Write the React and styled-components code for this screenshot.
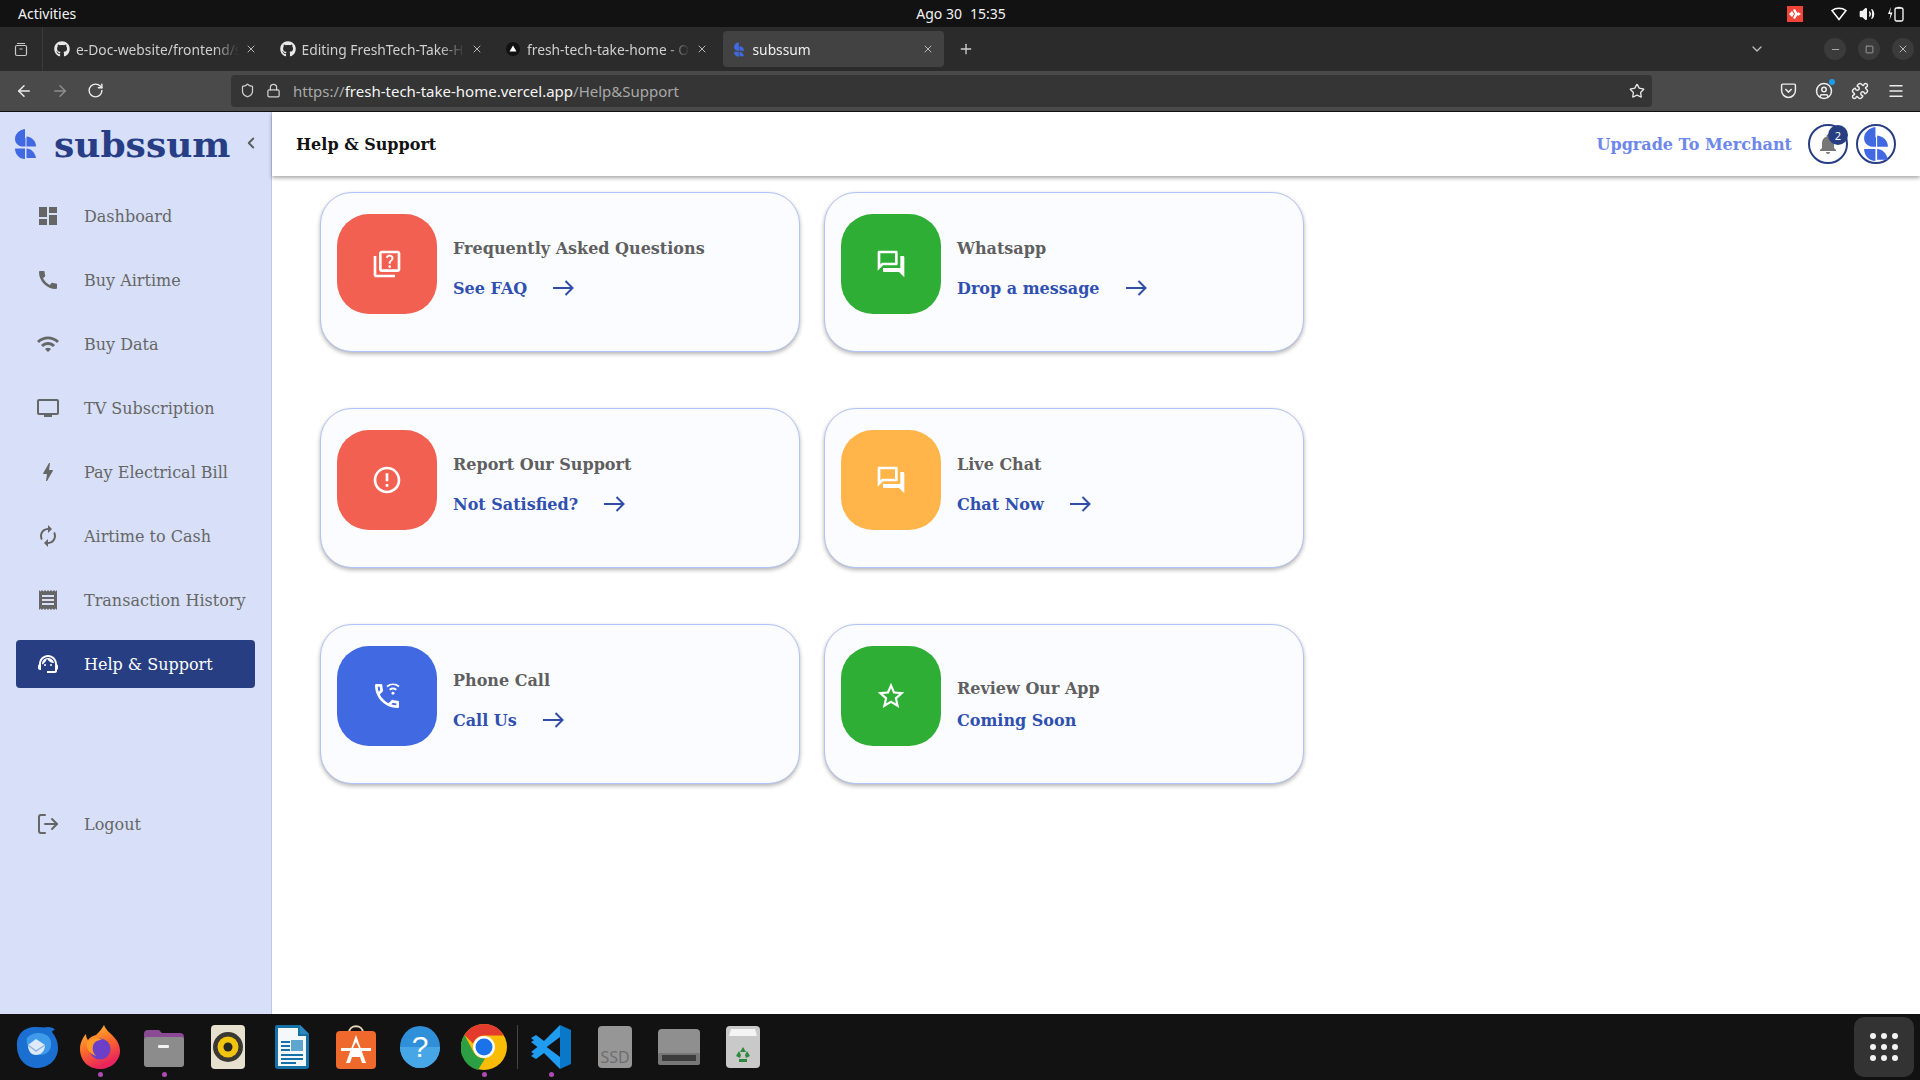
import React from "react";
import styled, { createGlobalStyle } from "styled-components";
import { FaGithub } from "react-icons/fa";
import {
    ArrowLeft,
    ArrowRight,
    ChevronDown,
    ChevronLeft,
    CircleUser,
    Lock,
    LogOut,
    Menu,
    Minus,
    Plus,
    Puzzle,
    RotateCw,
    Shield,
    Square,
    Star,
    Volume2,
    X,
} from "lucide-react";

const GlobalStyle = createGlobalStyle`
    html, body {
        margin: 0;
        padding: 0;
        width: 100%;
        height: 100%;
        overflow: hidden;
        background: #fff;
    }
    * {
        box-sizing: border-box;
    }
`;

const Screen = styled.div`
    width: 1920px;
    height: 1080px;
    display: flex;
    flex-direction: column;
    overflow: hidden;
    font-family: "DejaVu Serif", serif;
`;

/* system bar */
const TopBar = styled.div`
    height: 27px;
    flex: none;
    background: #121212;
    color: #f2f2f2;
    font-family: "Noto Sans", sans-serif;
    font-size: 14px;
    display: grid;
    grid-template-columns: 1fr auto 1fr;
    align-items: center;
    padding: 0 16px 0 18px;
`;

const Clock = styled.div`
    display: flex;
    gap: 8px;
`;

const Tray = styled.div`
    display: flex;
    align-items: center;
    justify-content: flex-end;
    gap: 12px;
`;

const RecordBadge = styled.div`
    width: 16px;
    height: 16px;
    background: #f0433a;
    margin-right: 16px;
    display: flex;
    align-items: center;
    justify-content: center;
`;

/* tabs */
const TabStrip = styled.div`
    height: 44px;
    flex: none;
    background: #2b2b2b;
    display: flex;
    align-items: center;
    color: #d6d6d6;
    font-family: "Noto Sans", sans-serif;
    font-size: 13.8px;
`;

const TabListButton = styled.div`
    width: 43px;
    height: 44px;
    border-right: 1px solid #3c3c3c;
    margin-right: 3px;
    display: flex;
    align-items: center;
    justify-content: center;
    color: #c8c8c8;
`;

const Tab = styled.div`
    width: 221px;
    height: 36px;
    margin-right: 4.5px;
    padding: 0 10px 0 8px;
    display: flex;
    align-items: center;
    gap: 6px;
    border-radius: 4px;
    background: ${(p) => (p.$active ? "#424242" : "transparent")};
    color: ${(p) => (p.$active ? "#f0f0f0" : "#cfcfcf")};
`;

const TabTitle = styled.span`
    flex: 1;
    white-space: nowrap;
    overflow: hidden;
    mask-image: linear-gradient(to right, #000 85%, transparent 100%);
`;

const FaviconSlot = styled.span`
    width: 16px;
    height: 16px;
    flex: none;
    display: flex;
    align-items: center;
    justify-content: center;
    color: #e8e8e8;
`;

const NewTab = styled.div`
    margin-left: 10px;
    display: flex;
    color: #d0d0d0;
`;

const WindowControls = styled.div`
    margin-left: auto;
    display: flex;
    align-items: center;
    padding-right: 6px;
    gap: 12px;
`;

const TabsMenu = styled.div`
    display: flex;
    color: #bdbdbd;
    margin-right: 47px;
`;

const WindowButton = styled.div`
    width: 22px;
    height: 22px;
    border-radius: 50%;
    background: #3b3b3b;
    display: flex;
    align-items: center;
    justify-content: center;
    color: #b5b5b5;
`;

/* address bar */
const Toolbar = styled.div`
    height: 41px;
    flex: none;
    background: #4a4a4a;
    border-bottom: 1px solid #111;
    display: flex;
    align-items: center;
    padding: 0 15px 1px 0;
    color: #ececec;
`;

const NavButtons = styled.div`
    width: 231px;
    padding-left: 15px;
    display: flex;
    align-items: center;
    gap: 18px;
`;

const UrlBar = styled.div`
    width: 1421px;
    height: 32px;
    border-radius: 4px;
    background: #353535;
    display: flex;
    align-items: center;
    padding: 0 7px 0 9px;
    gap: 11px;
    font-family: "Noto Sans", sans-serif;
    font-size: 15px;
    color: #a8a8a8;
`;

const UrlText = styled.div`
    flex: 1;
    margin-left: 1px;
    white-space: nowrap;
    b {
        font-weight: 400;
        color: #f4f4f4;
    }
`;

const ToolIcons = styled.div`
    margin-left: auto;
    display: flex;
    align-items: center;
    gap: 18px;
`;

const AccountWrap = styled.div`
    position: relative;
    display: flex;
    &::after {
        content: "";
        position: absolute;
        top: -3px;
        right: -2px;
        width: 6px;
        height: 6px;
        border-radius: 50%;
        background: #1e9ce8;
    }
`;

/* page */
const Body = styled.div`
    flex: 1;
    min-height: 0;
    display: flex;
`;

const Sidebar = styled.aside`
    width: 272px;
    flex: none;
    background: #d7e0f8;
    border-right: 1px solid #bcc8e6;
    padding: 0 16px;
`;

const Brand = styled.div`
    height: 64px;
    display: flex;
    align-items: center;
    margin: 0 -16px 16px;
    padding-left: 15px;
`;

const BrandName = styled.div`
    font-size: 36px;
    font-weight: 700;
    color: #273e86;
    margin-left: 18px;
    line-height: 1;
`;

const BrandToggle = styled.div`
    display: flex;
    color: #5c5c5c;
    margin-left: 12px;
    margin-top: -3px;
`;

const NavList = styled.nav`
    display: flex;
    flex-direction: column;
    gap: 16px;
    width: 239px;
`;

const NavItem = styled.div`
    height: 48px;
    padding-left: 20px;
    display: flex;
    align-items: center;
    gap: 24px;
    font-size: 16px;
    border-radius: 4px;
    white-space: nowrap;
    margin-top: ${(p) => (p.$pushed ? "96px" : "0")};
    background: ${(p) => (p.$active ? "#273e82" : "transparent")};
    color: ${(p) => (p.$active ? "#fff" : "#666")};
`;

const Main = styled.main`
    flex: 1;
    min-width: 0;
    background: #fff;
`;

const Header = styled.header`
    height: 64px;
    background: #fff;
    box-shadow: 0 2px 4px rgba(0, 0, 0, 0.35);
    display: flex;
    align-items: center;
    padding: 0 24px;
`;

const PageTitle = styled.h1`
    margin: 0;
    font-size: 16px;
    font-weight: 700;
    color: #111;
`;

const UpgradeLink = styled.div`
    margin-left: auto;
    margin-right: 16px;
    font-size: 16px;
    font-weight: 700;
    color: #6d87ea;
`;

const RoundButton = styled.div`
    position: relative;
    width: 40px;
    height: 40px;
    border-radius: 50%;
    border: 2px solid #273e82;
    background: #fff;
    margin-left: ${(p) => p.$gap || 0}px;
    display: flex;
    align-items: center;
    justify-content: center;
    color: #777;
`;

const Badge = styled.span`
    position: absolute;
    top: -1px;
    right: -2px;
    width: 20px;
    height: 20px;
    border-radius: 50%;
    background: #273e82;
    color: #fff;
    font-size: 11px;
    font-family: "Noto Sans", sans-serif;
    display: flex;
    align-items: center;
    justify-content: center;
`;

const CardGrid = styled.div`
    display: grid;
    grid-template-columns: repeat(2, 480px);
    grid-auto-rows: 160px;
    column-gap: 24px;
    row-gap: 56px;
    padding: 16px 0 0 48px;
`;

const Card = styled.div`
    background: #fbfcff;
    border: 1px solid #b3c3f3;
    border-radius: 32px;
    box-shadow: 0 2px 4px rgba(0, 0, 0, 0.3);
    padding: 21px 16px 0;
    display: flex;
    align-items: flex-start;
    gap: 16px;
`;

const IconTile = styled.div`
    width: 100px;
    height: 100px;
    flex: none;
    border-radius: 32px;
    background: ${(p) => p.$color};
    color: #fff;
    display: flex;
    align-items: center;
    justify-content: center;
`;

const CardText = styled.div`
    height: 100px;
    padding-bottom: 14px;
    display: flex;
    flex-direction: column;
    justify-content: flex-end;
`;

const CardTitle = styled.div`
    height: 24px;
    line-height: 24px;
    font-size: 16px;
    font-weight: 700;
    color: #5f5f5f;
    margin-bottom: ${(p) => (p.$tight ? "7px" : "15px")};
`;

const CardLink = styled.div`
    height: 24px;
    display: flex;
    align-items: center;
    gap: 26px;
    font-size: 16px;
    font-weight: 700;
    color: #3050b0;
`;

/* dock */
const Dock = styled.div`
    height: 66px;
    flex: none;
    background: #121212;
    display: flex;
    align-items: center;
    padding: 0 6px 0 4px;
`;

const DockItem = styled.div`
    position: relative;
    width: 64px;
    height: 66px;
    flex: none;
    display: flex;
    align-items: center;
    justify-content: center;
    ${(p) =>
        p.$running &&
        `&::after {
            content: "";
            position: absolute;
            bottom: 3px;
            left: 50%;
            margin-left: -2.5px;
            width: 5px;
            height: 5px;
            border-radius: 50%;
            background: #b04bb5;
        }`}
`;

const DockSeparator = styled.div`
    width: 1px;
    height: 44px;
    margin: 0 1px;
    background: #444;
    flex: none;
`;

const AppGrid = styled.div`
    margin-left: auto;
    width: 60px;
    height: 60px;
    border-radius: 10px;
    background: #333;
    display: grid;
    grid-template-columns: repeat(3, 6px);
    grid-auto-rows: 6px;
    gap: 5px;
    align-content: center;
    justify-content: center;
    span {
        background: #f2f2f2;
        border-radius: 50%;
    }
`;

const MuiIcon = ({ d, size = 24, fill = "currentColor" }) => (
    <svg width={size} height={size} viewBox="0 0 24 24" fill={fill}>
        <path d={d} />
    </svg>
);

const LogoMark = ({ width = 21, height = 30 }) => (
    <svg width={width} height={height} viewBox="0 0 21 30" fill="#4169e1">
        <path d="M10 0C4 1 0 5 0 10c0 4 3 7 7 7.500h3.500V9H10z" />
        <path d="M11.500 7.500C17 8 21 12 21 17.500h-9.500z" />
        <path d="M0 19.500h10V30C4 30 0 25 0 19.500z" />
        <path d="M11.500 19.500c4.500 0 8.500 4 9.500 9.500h-9.500z" />
    </svg>
);

const HeadsetIcon = () => (
    <svg width="24" height="24" viewBox="0 0 24 24" fill="currentColor">
        <path d="M21 12.220C21 6.730 16.740 3 12 3c-4.690 0-9 3.650-9 9.280-.6.340-1 .980-1 1.720v2c0 1.100.9 2 2 2h1v-6.100c0-3.870 3.130-7 7-7s7 3.130 7 7V19h-8v2h8c1.100 0 2-.9 2-2v-1.220c.59-.31 1-.92 1-1.610v-2.300c0-.67-.41-1.280-1-1.650z" />
        <circle cx="9" cy="13" r="1" />
        <circle cx="15" cy="13" r="1" />
        <path d="M18 11.030C17.520 8.180 15.040 6 12.050 6c-3.030 0-6.290 2.510-6.030 6.450 2.470-1.010 4.330-3.210 4.860-5.890 1.310 2.630 4 4.440 7.120 4.470z" />
    </svg>
);

const WifiCallIcon = () => (
    <svg width="32" height="32" viewBox="0 0 24 24" fill="currentColor">
        <path d="M6.540 5c.06.89.21 1.760.45 2.590l-1.200 1.200c-.41-1.200-.67-2.470-.76-3.790h1.510m9.860 12.020c.85.24 1.720.39 2.600.45v1.490c-1.320-.09-2.590-.35-3.800-.75l1.200-1.190M7.500 3H4c-.55 0-1 .45-1 1 0 9.390 7.610 17 17 17 .55 0 1-.45 1-1v-3.490c0-.55-.45-1-1-1-1.240 0-2.450-.2-3.570-.57-.1-.04-.21-.05-.31-.05-.26 0-.51.1-.71.29l-2.200 2.200c-2.830-1.450-5.150-3.760-6.590-6.590l2.200-2.200c.28-.28.36-.67.25-1.020C8.700 6.450 8.500 5.250 8.500 4c0-.55-.45-1-1-1z" />
        <path d="M12 4.800a7.500 7.500 0 0 1 9 0M14 7.300a4.200 4.200 0 0 1 5 0" fill="none" stroke="currentColor" strokeWidth="1.400" />
        <circle cx="16.500" cy="10" r="1.100" />
    </svg>
);

const LinkArrow = () => (
    <svg width="21" height="16" viewBox="0 0 21 16" fill="none" stroke="#2f4ca8" strokeWidth="2">
        <path d="M0 8h19M12.500 1l7 7-7 7" />
    </svg>
);

const PocketIcon = () => (
    <svg width="17" height="17" viewBox="0 0 16 16" fill="none" stroke="currentColor" strokeWidth="1.400">
        <path d="M2.500 2h11a1 1 0 0 1 1 1v5a6.500 6.500 0 0 1-13 0V3a1 1 0 0 1 1-1z" />
        <path d="M5 6.500l3 3 3-3" />
    </svg>
);

const icons = {
    dashboard: "M3 13h8V3H3v10zm0 8h8v-6H3v6zm10 0h8V11h-8v10zm0-18v6h8V3h-8z",
    phone: "M20.010 15.380c-1.230 0-2.420-.2-3.530-.56a.977.977 0 0 0-1.010.24l-1.570 1.970c-2.830-1.350-5.480-3.900-6.890-6.830l1.950-1.660c.27-.28.35-.67.24-1.020-.37-1.110-.56-2.300-.56-3.530 0-.54-.45-.99-.99-.99H4.190C3.650 3 3 3.240 3 3.990 3 13.280 10.730 21 20.010 21c.71 0 .99-.63.99-1.180v-3.450c0-.54-.45-.99-.99-.99z",
    wifi: "M1 9l2 2c4.970-4.970 13.030-4.970 18 0l2-2C16.930 2.930 7.080 2.930 1 9zm8 8l3 3 3-3c-1.650-1.660-4.340-1.660-6 0zm-4-4l2 2c2.760-2.760 7.240-2.760 10 0l2-2C15.140 9.140 8.870 9.140 5 13z",
    tv: "M21 3H3c-1.100 0-2 .9-2 2v12c0 1.100.9 2 2 2h5v2h8v-2h5c1.100 0 1.990-.9 1.990-2L23 5c0-1.100-.9-2-2-2zm0 14H3V5h18v12z",
    bolt: "M11 21h-1l1-7H7.500c-.58 0-.57-.32-.38-.66.19-.34.05-.08.07-.12C8.480 10.940 10.420 7.540 13 3h1l-1 7h3.500c.49 0 .56.33.47.51l-.07.15C12.960 17.550 11 21 11 21z",
    cached: "M12 6v3l4-4-4-4v3c-4.420 0-8 3.580-8 8 0 1.570.46 3.030 1.240 4.260L6.700 14.800c-.45-.83-.7-1.790-.7-2.800 0-3.310 2.690-6 6-6zm6.760 1.740L17.300 9.200c.44.84.7 1.790.7 2.800 0 3.310-2.690 6-6 6v-3l-4 4 4 4v-3c4.420 0 8-3.580 8-8 0-1.570-.46-3.030-1.240-4.260z",
    receipt: "M18 17H6v-2h12v2zm0-4H6v-2h12v2zm0-4H6V7h12v2zM3 22l1.500-1.500L6 22l1.500-1.500L9 22l1.500-1.500L12 22l1.500-1.500L15 22l1.500-1.500L18 22l1.500-1.500L21 22V2l-1.500 1.500L18 2l-1.500 1.500L15 2l-1.500 1.500L12 2l-1.500 1.500L9 2 7.500 3.500 6 2 4.500 3.500 3 2v20z",
    quiz: "M4 6H2v14c0 1.100.9 2 2 2h14v-2H4V6zm16-4H8c-1.100 0-2 .9-2 2v12c0 1.100.9 2 2 2h12c1.100 0 2-.9 2-2V4c0-1.100-.9-2-2-2zm0 14H8V4h12v12zm-6.490-5.840c.41-.73 1.180-1.160 1.630-1.800.48-.68.21-1.940-1.140-1.940-.88 0-1.320.67-1.500 1.230l-1.370-.58C11.510 5.960 12.520 5 13.990 5c1.230 0 2.080.56 2.510 1.260.37.6.58 1.730.01 2.570-.63.93-1.230 1.210-1.560 1.810-.13.24-.18.4-.18 1.180h-1.520c.01-.41-.06-1.080.26-1.660zm-.56 3.790c0-.59.47-1.040 1.050-1.040.59 0 1.040.45 1.040 1.040 0 .58-.44 1.050-1.040 1.050-.58 0-1.050-.47-1.050-1.050z",
    forum: "M15 4v7H5.170L4 12.170V4h11m1-2H3c-.55 0-1 .45-1 1v14l4-4h10c.55 0 1-.45 1-1V3c0-.55-.45-1-1-1zm5 4h-2v9H6v2c0 .55.45 1 1 1h11l4 4V7c0-.55-.45-1-1-1z",
    error: "M11 15h2v2h-2zm0-8h2v6h-2zm.99-5C6.470 2 2 6.480 2 12s4.470 10 9.990 10C17.520 22 22 17.520 22 12S17.520 2 11.990 2zM12 20c-4.420 0-8-3.580-8-8s3.580-8 8-8 8 3.580 8 8-3.580 8-8 8z",
    star: "M22 9.240l-7.190-.62L12 2 9.190 8.630 2 9.240l5.460 4.730L5.820 21 12 17.270 18.180 21l-1.630-7.030L22 9.240zM12 15.400l-3.760 2.270 1-4.280-3.320-2.880 4.380-.38L12 6.100l1.710 4.040 4.380.38-3.320 2.880 1 4.280L12 15.400z",
    bell: "M12 22c1.100 0 2-.9 2-2h-4c0 1.100.9 2 2 2zm6-6v-5c0-3.070-1.630-5.640-4.500-6.320V4c0-.83-.67-1.500-1.500-1.500s-1.500.67-1.500 1.500v.68C7.640 5.360 6 7.920 6 11v5l-2 2v1h16v-1l-2-2z",
};

const navItems = [
    { label: "Dashboard", icon: <MuiIcon d={icons.dashboard} /> },
    { label: "Buy Airtime", icon: <MuiIcon d={icons.phone} /> },
    { label: "Buy Data", icon: <MuiIcon d={icons.wifi} /> },
    { label: "TV Subscription", icon: <MuiIcon d={icons.tv} /> },
    { label: "Pay Electrical Bill", icon: <MuiIcon d={icons.bolt} /> },
    { label: "Airtime to Cash", icon: <MuiIcon d={icons.cached} /> },
    { label: "Transaction History", icon: <MuiIcon d={icons.receipt} /> },
    { label: "Help & Support", icon: <HeadsetIcon />, active: true },
    { label: "Logout", icon: <LogOut size={24} />, pushed: true },
];

const cards = [
    { title: "Frequently Asked Questions", link: "See FAQ", color: "#f26052", icon: <MuiIcon d={icons.quiz} size={32} /> },
    { title: "Whatsapp", link: "Drop a message", color: "#2eae34", icon: <MuiIcon d={icons.forum} size={32} /> },
    { title: "Report Our Support", link: "Not Satisfied?", color: "#f26052", icon: <MuiIcon d={icons.error} size={32} /> },
    { title: "Live Chat", link: "Chat Now", color: "#ffb54a", icon: <MuiIcon d={icons.forum} size={32} /> },
    { title: "Phone Call", link: "Call Us", color: "#4169e1", icon: <WifiCallIcon /> },
    { title: "Review Our App", link: "Coming Soon", color: "#2eae34", icon: <MuiIcon d={icons.star} size={32} />, soon: true },
];

const VercelIcon = () => (
    <svg width="14" height="14" viewBox="0 0 14 14">
        <circle cx="7" cy="7" r="7" fill="#111" />
        <path d="M7 3.500l3.500 6h-7z" fill="#fff" />
    </svg>
);

const tabs = [
    { title: "e-Doc-website/frontend/src", icon: <FaGithub size={16} /> },
    { title: "Editing FreshTech-Take-Home", icon: <FaGithub size={16} /> },
    { title: "fresh-tech-take-home - Overview", icon: <VercelIcon /> },
    { title: "subssum", icon: <LogoMark width={10} height={15} />, active: true },
];

/* dock artwork */
const Thunderbird = () => (
    <svg width="46" height="46" viewBox="0 0 46 46">
        <path d="M4 22C3 10 12 3 22 3c5 0 9 1 13 0 3 0 6 1 7 3-2 0-3 1-3 2 4 5 6 10 6 16 0 11-9 20-21 20C12 44 4 34 4 22z" fill="#1a6fd0" />
        <path d="M14 14c5-6 16-7 22-1 3 4 3 11-1 15-3 3-8 4-12 2-5-3-11-9-9-16z" fill="#3f9bea" />
        <path d="M15 21l8-6 9 6c0 6-4 10-9 10s-8-4-8-10z" fill="#dfeaf8" />
        <path d="M15 21l8 6 9-6" fill="none" stroke="#8fb4e0" strokeWidth="1.500" />
    </svg>
);

const Firefox = () => (
    <svg width="42" height="46" viewBox="0 0 42 46">
        <defs>
            <linearGradient id="ffOuter" x1="0" y1="0" x2="0.4" y2="1">
                <stop offset="0" stopColor="#ffcb2f" />
                <stop offset="0.55" stopColor="#ff6a2a" />
                <stop offset="1" stopColor="#e8235e" />
            </linearGradient>
        </defs>
        <path d="M21 45C9 45 1 36 1 25c0-6 3-12 6-15 0 3 1 5 2 6 2-3 5-4 8-5 3-3 6-6 8-10 2 5 5 7 9 11 5 5 7 10 7 15 0 10-9 18-20 18z" fill="url(#ffOuter)" />
        <circle cx="21" cy="25" r="10.500" fill="#6b3fc7" />
        <path d="M8 18c4-4 11-5 15-2-5 0-8 2-9 6-1 3 0 7 3 10-6-2-11-8-9-14z" fill="#ff9a27" />
    </svg>
);

const Files = () => (
    <svg width="42" height="42" viewBox="0 0 42 42">
        <path d="M1 8a4 4 0 0 1 4-4h11l3 3h18a4 4 0 0 1 4 4v8H1z" fill="#8a4a94" />
        <rect x="1" y="11" width="40" height="30" rx="3" fill="#8c8c8c" />
        <rect x="15" y="19" width="11" height="3" rx="1" fill="#f2f2f2" />
    </svg>
);

const Rhythmbox = () => (
    <svg width="34" height="44" viewBox="0 0 34 44">
        <rect x="0" y="0" width="34" height="44" rx="4" fill="#e6e0cf" />
        <circle cx="17" cy="22" r="15" fill="#3a3833" />
        <circle cx="17" cy="22" r="10.500" fill="#f1c40f" />
        <circle cx="17" cy="22" r="4.500" fill="#272622" />
    </svg>
);

const Writer = () => (
    <svg width="34" height="44" viewBox="0 0 34 44">
        <path d="M2 0h23l9 9v32a3 3 0 0 1-3 3H3a3 3 0 0 1-3-3V2a2 2 0 0 1 2-2z" fill="#1572a8" />
        <path d="M3 3h20v8h8v30H3z" fill="#f4f8fb" />
        <path d="M25 0l9 9h-9z" fill="#2d88bc" />
        <rect x="6" y="16" width="9" height="2" fill="#1572a8" />
        <rect x="6" y="20" width="9" height="2" fill="#1572a8" />
        <rect x="6" y="24" width="9" height="2" fill="#1572a8" />
        <rect x="16" y="15" width="12" height="11" fill="#5fa6cf" />
        <rect x="6" y="29" width="22" height="2" fill="#1572a8" />
        <rect x="6" y="33" width="22" height="2" fill="#1572a8" />
        <rect x="6" y="37" width="15" height="2" fill="#1572a8" />
    </svg>
);

const AppStore = () => (
    <svg width="40" height="44" viewBox="0 0 40 44">
        <path d="M13 8c0-9 14-9 14 0" fill="none" stroke="#e8d4b8" strokeWidth="2" />
        <rect x="0" y="6" width="40" height="38" rx="4" fill="#f0692c" />
        <path d="M20 10l10 28h-4l-2-6h-8l-2 6h-4z" fill="#fff" />
        <rect x="5" y="23" width="30" height="3" fill="#fff" />
        <path d="M20 17l-3 6h6z" fill="#f0692c" />
    </svg>
);

const HelpIcon = () => (
    <svg width="40" height="42" viewBox="0 0 40 42">
        <ellipse cx="20" cy="21" rx="20" ry="21" fill="#2f8fd8" />
        <path d="M0 21a20 21 0 0 0 40 0z" fill="#47a6e6" />
        <text x="20" y="31" fontFamily="Liberation Sans, sans-serif" fontSize="30" fill="#fff" textAnchor="middle">?</text>
    </svg>
);

const Chrome = () => (
    <svg width="46" height="46" viewBox="0 0 46 46">
        <circle cx="23" cy="23" r="23" fill="#fbbc05" />
        <path d="M23 0a23 23 0 0 1 20 11.500H23a11.500 11.500 0 0 0-11 8L3.500 11A23 23 0 0 1 23 0z" fill="#e33b2e" />
        <path d="M3.500 11L12 27a11.500 11.500 0 0 0 12 7.500L17 46A23 23 0 0 1 3.500 11z" fill="#2c9f45" />
        <circle cx="23" cy="23" r="11" fill="#fff" />
        <circle cx="23" cy="23" r="8.500" fill="#1a73e8" />
    </svg>
);

const VsCode = () => (
    <svg width="40" height="44" viewBox="0 0 40 44">
        <path d="M29 0l11 5v34l-11 5z" fill="#0a78c8" />
        <path d="M29 0v12L13 24l-8 6-5-3 9-7-9-7 5-3 8 6z" fill="#1f9cf0" />
        <path d="M29 44V32L13 20l-8-6-5 3 9 7-9 7 5 3 8-6z" fill="#1f9cf0" />
    </svg>
);

const SsdDrive = () => (
    <svg width="34" height="42" viewBox="0 0 34 42">
        <rect width="34" height="42" rx="4" fill="#969696" />
        <text x="17" y="37" fontFamily="Noto Sans, sans-serif" fontSize="16" fill="#6e6e6e" textAnchor="middle">SSD</text>
    </svg>
);

const DiskDrive = () => (
    <svg width="42" height="36" viewBox="0 0 42 36">
        <rect width="42" height="36" rx="4" fill="#8f8f8f" />
        <rect y="24" width="42" height="12" rx="2" fill="#777" />
        <rect x="4" y="26" width="34" height="6" fill="#3c3c3c" />
    </svg>
);

const Trash = () => (
    <svg width="34" height="42" viewBox="0 0 34 42">
        <rect width="34" height="42" rx="4" fill="#c9c9c9" />
        <path d="M5 3h24l2 7H3z" fill="#f4f4f4" />
        <path d="M17 21l3 5h-6zM10 30l3-5 2 4-1 3zM24 30l-3-5-2 4 1 3z" fill="#2d8a3c" />
        <path d="M13 33h8v3h-8z" fill="#2d8a3c" />
    </svg>
);

const dockApps = [
    { icon: <Thunderbird /> },
    { icon: <Firefox />, running: true },
    { icon: <Files />, running: true },
    { icon: <Rhythmbox /> },
    { icon: <Writer /> },
    { icon: <AppStore /> },
    { icon: <HelpIcon /> },
    { icon: <Chrome />, running: true },
    { separator: true },
    { icon: <VsCode />, running: true },
    { icon: <SsdDrive /> },
    { icon: <DiskDrive /> },
    { icon: <Trash /> },
];

const App = () => {
    return (
        <Screen>
            <GlobalStyle />

            <TopBar>
                <span>Activities</span>
                <Clock>
                    <span>Ago 30</span>
                    <span>15:35</span>
                </Clock>
                <Tray>
                    <RecordBadge>
                        <svg width="12" height="10" viewBox="0 0 12 10" fill="#fff">
                            <path d="M0 5l3-3 2 3-2 3zM4 1l2-1 3 5-3 5-2-1 2-4zM9 3l3 2-3 2-1-2z" />
                        </svg>
                    </RecordBadge>
                    <svg width="16" height="14" viewBox="0 0 16 14" fill="none" stroke="#fff" strokeWidth="1.500">
                        <path d="M1 3.500C5 .5 11 .5 15 3.500L8 12.500z" />
                    </svg>
                    <Volume2 size={16} color="#f2f2f2" fill="#f2f2f2" />
                    <svg width="17" height="16" viewBox="0 0 17 16" fill="none" stroke="#fff" strokeWidth="1.300">
                        <path d="M4 1L1 8h2.500L2.500 14 5.500 6.500H3z" fill="#fff" stroke="none" />
                        <rect x="8" y="2" width="8" height="13" rx="1.500" />
                        <path d="M10.500 1.500h3" />
                    </svg>
                </Tray>
            </TopBar>

            <TabStrip>
                <TabListButton>
                    <svg width="16" height="16" viewBox="0 0 16 16" fill="none" stroke="currentColor" strokeWidth="1.200">
                        <rect x="2.500" y="4.500" width="11" height="10" rx="1.500" />
                        <path d="M4 2.500h8M6.500 8h3" />
                    </svg>
                </TabListButton>
                {tabs.map((tab) => (
                    <Tab key={tab.title} $active={tab.active}>
                        <FaviconSlot>{tab.icon}</FaviconSlot>
                        <TabTitle>{tab.title}</TabTitle>
                        <X size={12} color="#b8b8b8" />
                    </Tab>
                ))}
                <NewTab>
                    <Plus size={16} />
                </NewTab>
                <WindowControls>
                    <TabsMenu>
                        <ChevronDown size={16} />
                    </TabsMenu>
                    <WindowButton>
                        <Minus size={11} />
                    </WindowButton>
                    <WindowButton>
                        <Square size={9} />
                    </WindowButton>
                    <WindowButton>
                        <X size={12} />
                    </WindowButton>
                </WindowControls>
            </TabStrip>

            <Toolbar>
                <NavButtons>
                    <ArrowLeft size={18} />
                    <ArrowRight size={18} color="#8e8e8e" />
                    <RotateCw size={17} />
                </NavButtons>
                <UrlBar>
                    <Shield size={15} color="#d0d0d0" />
                    <Lock size={15} color="#d0d0d0" />
                    <UrlText>
                        https://<b>fresh-tech-take-home.vercel.app</b>/Help&amp;Support
                    </UrlText>
                    <Star size={16} color="#e8e8e8" />
                </UrlBar>
                <ToolIcons>
                    <PocketIcon />
                    <AccountWrap>
                        <CircleUser size={18} />
                    </AccountWrap>
                    <Puzzle size={18} />
                    <Menu size={18} />
                </ToolIcons>
            </Toolbar>

            <Body>
                <Sidebar>
                    <Brand>
                        <LogoMark />
                        <BrandName>subssum</BrandName>
                        <BrandToggle>
                            <ChevronLeft size={18} strokeWidth={2.500} />
                        </BrandToggle>
                    </Brand>
                    <NavList>
                        {navItems.map((item) => (
                            <NavItem key={item.label} $active={item.active} $pushed={item.pushed}>
                                {item.icon}
                                {item.label}
                            </NavItem>
                        ))}
                    </NavList>
                </Sidebar>

                <Main>
                    <Header>
                        <PageTitle>Help &amp; Support</PageTitle>
                        <UpgradeLink>Upgrade To Merchant</UpgradeLink>
                        <RoundButton>
                            <MuiIcon d={icons.bell} size={24} />
                            <Badge>2</Badge>
                        </RoundButton>
                        <RoundButton $gap={8}>
                            <LogoMark width={24} height={34} />
                        </RoundButton>
                    </Header>

                    <CardGrid>
                        {cards.map((card) => (
                            <Card key={card.title}>
                                <IconTile $color={card.color}>{card.icon}</IconTile>
                                <CardText>
                                    <CardTitle $tight={card.soon}>{card.title}</CardTitle>
                                    <CardLink>
                                        {card.link}
                                        {!card.soon && <LinkArrow />}
                                    </CardLink>
                                </CardText>
                            </Card>
                        ))}
                    </CardGrid>
                </Main>
            </Body>

            <Dock>
                {dockApps.map((app, i) =>
                    app.separator ? (
                        <DockSeparator key={i} />
                    ) : (
                        <DockItem key={i} $running={app.running}>
                            {app.icon}
                        </DockItem>
                    )
                )}
                <AppGrid>
                    {Array.from({ length: 9 }).map((_, i) => (
                        <span key={i} />
                    ))}
                </AppGrid>
            </Dock>
        </Screen>
    );
};

export default App;
